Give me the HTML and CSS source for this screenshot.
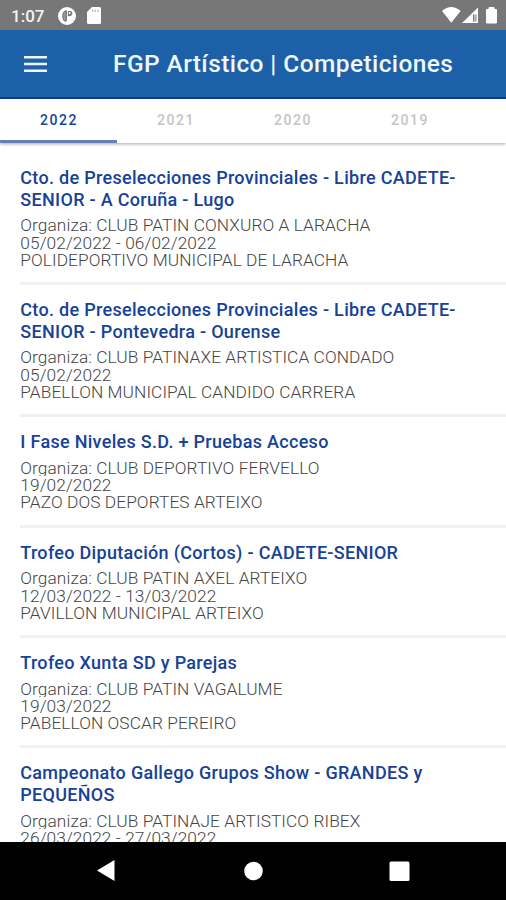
FILE: index.html
```html
<!DOCTYPE html>
<html lang="es">
<head>
<meta charset="utf-8">
<title>FGP Artístico | Competiciones</title>
<link rel="stylesheet" href="styles.css">
</head>
<body>
<div class="screen">
  <div class="status">
    <span class="clock">1:07</span>
    <svg class="app-icon" width="18" height="18" viewBox="0 0 18 18"><circle cx="9" cy="9" r="9" fill="#fff"/><path d="M7.500 3.800C4.300 4.500 3.800 12 6.600 14H8.300V3.800z" fill="#999" stroke="#666"/><path d="M9.800 4v5.200c3 .4 4.500-1.200 4.500-3 0-1.200-.7-1.900-1.600-2.200z" fill="#777"/><circle cx="11.600" cy="6" r="1" fill="#fff"/></svg>
    <svg class="sd-icon" width="14" height="17" viewBox="0 0 14 17"><path d="M5 0h7.500Q14 0 14 1.500v14q0 1.500-1.500 1.500h-11Q0 17 0 15.500V5z" fill="#fff"/><path d="M5.500 2.500v2.500M8.200 2.500v2.500M11 2.500v2.500" stroke="#bbb" stroke-width="1.300"/></svg>
    <svg class="signals" width="56" height="17" viewBox="0 0 56 17"><path d="M0 4Q9.200-3.800 18.600 4L9.300 15.800z" fill="#fff"/><path d="M20 16L36 .5V16z" fill="#fff"/><path d="M31 7.500h3.400v7H31z" fill="#777"/><path d="M32.300 7h1.200v8h-1.200z" fill="#ddd"/><path d="M47 .5h5v2h2.500v13.500H44.500V2.500H47z" fill="#fff" stroke="#fff" stroke-linejoin="round"/></svg>
  </div>
  <header class="appbar">
    <svg class="menu" width="23" height="16" viewBox="0 0 23 16"><path d="M0 1.300h23M0 8h23M0 14.700h23" stroke="#eef5fc" stroke-width="2.500"/></svg>
    <h1>FGP Artístico | Competiciones</h1>
  </header>
  <nav class="tabs">
    <span class="tab active">2022</span><span class="tab">2021</span><span class="tab">2020</span><span class="tab">2019</span>
  </nav>
  <main class="list">
    <article class="item"><h2>Cto. de Preselecciones Provinciales - Libre CADETE-<br>SENIOR - A Coruña - Lugo</h2><p>Organiza: CLUB PATIN CONXURO A LARACHA</p><p>05/02/2022 - 06/02/2022</p><p>POLIDEPORTIVO MUNICIPAL DE LARACHA</p></article>
    <article class="item"><h2>Cto. de Preselecciones Provinciales - Libre CADETE-<br>SENIOR - Pontevedra - Ourense</h2><p>Organiza: CLUB PATINAXE ARTISTICA CONDADO</p><p>05/02/2022</p><p>PABELLON MUNICIPAL CANDIDO CARRERA</p></article>
    <article class="item"><h2>I Fase Niveles S.D. + Pruebas Acceso</h2><p>Organiza: CLUB DEPORTIVO FERVELLO</p><p>19/02/2022</p><p>PAZO DOS DEPORTES ARTEIXO</p></article>
    <article class="item"><h2>Trofeo Diputación (Cortos) - CADETE-SENIOR</h2><p>Organiza: CLUB PATIN AXEL ARTEIXO</p><p>12/03/2022 - 13/03/2022</p><p>PAVILLON MUNICIPAL ARTEIXO</p></article>
    <article class="item"><h2>Trofeo Xunta SD y Parejas</h2><p>Organiza: CLUB PATIN VAGALUME</p><p>19/03/2022</p><p>PABELLON OSCAR PEREIRO</p></article>
    <article class="item"><h2>Campeonato Gallego Grupos Show - GRANDES y<br>PEQUEÑOS</h2><p>Organiza: CLUB PATINAJE ARTISTICO RIBEX</p><p>26/03/2022 - 27/03/2022</p></article>
  </main>
  <footer class="navbar">
    <svg width="506" height="58" viewBox="0 0 506 58"><path d="M97 28.500L114.500 18v21z" fill="#fff"/><circle cx="253.500" cy="29" r="9.300" fill="#fff"/><rect x="389.500" y="19.500" width="20" height="19.500" rx="1.500" fill="#fff"/></svg>
  </footer>
</div>
</body>
</html>
```

FILE: styles.css
```css
* { box-sizing: border-box; margin: 0; padding: 0; }
body { font-family: Roboto, "Liberation Sans", sans-serif; background: #fff; overflow: hidden; }
svg { display: block; flex: none; }
.screen { width: 506px; height: 900px; display: flex; flex-direction: column; overflow: hidden; }
.status { height: 30px; flex: none; background: #777; display: flex; align-items: center; padding: 1px 8px 0 11px; color: #f4f4f4; }
.clock { width: 47px; font-size: 17px; font-weight: 500; line-height: 20px; }
.sd-icon { margin-left: 11px; }
.signals { margin-left: auto; }
.appbar { height: 69px; flex: none; background: #1c60a7; border-bottom: 2px solid #0d3b95; display: flex; align-items: center; padding: 1px 0 0 24px; color: #f0f7fd; }
.appbar h1 { margin-left: 66px; font-size: 24.500px; font-weight: 500; line-height: 30px; letter-spacing: .4px; white-space: nowrap; }
.tabs { height: 44px; flex: none; display: flex; background: #fff; box-shadow: 0 1px 3px rgba(0,0,0,.35); position: relative; }
.tab { width: 117px; flex: none; padding-left: 1px; text-align: center; line-height: 43px; font-size: 14px; font-weight: 500; letter-spacing: 1.6px; color: #c4c4c4; }
.tab.active { color: #15459b; border-bottom: 3px solid #6680b5; }
.list { flex: 1; min-height: 0; overflow: hidden; padding: 24.200px 0 0 20.300px; }
.item { border-bottom: 3px solid #f1f1f1; padding-bottom: 13.900px; margin-bottom: 14.100px; }
.item h2 { font-size: 18px; font-weight: 500; line-height: 21.700px; letter-spacing: .3px; color: #164298; white-space: nowrap; padding-bottom: 5.800px; }
.item p { font-size: 17.300px; font-weight: 300; line-height: 19.500px; letter-spacing: .08px; height: 17.300px; overflow: hidden; color: #444; white-space: nowrap; }
.navbar { height: 58px; flex: none; background: #000; }
```
